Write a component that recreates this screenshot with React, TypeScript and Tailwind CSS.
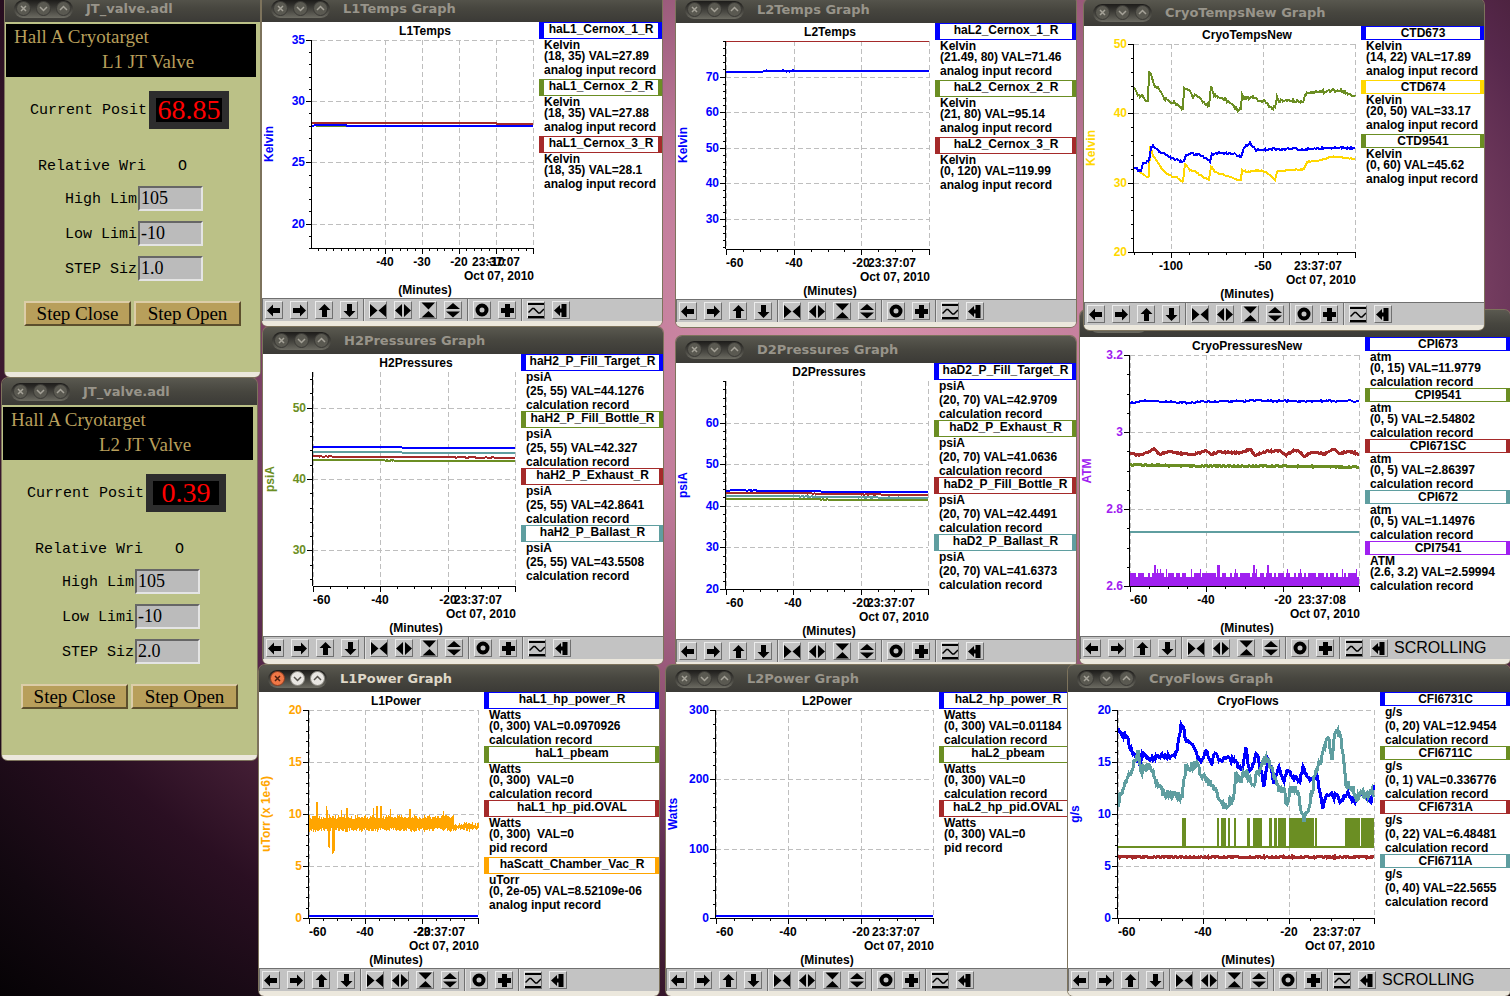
import React from 'react';
import clsx from 'clsx';

type Point = [number, number];

interface Series {
  color: string;
  width: number;
  points: Point[];
  jitter?: number;
  dash?: string;
}

interface Tick {
  value: number;
  label?: string;
}

interface Channel {
  name: string;
  color: string;
  unit: string;
  value: string;
  record: string;
}

interface GraphData {
  title: string;
  place: string;
  active?: boolean;
  axisLabel: string;
  axisColor: string;
  right: number;
  bottom: number;
  yRange: Point;
  yTicks: number[];
  yMinor: number;
  xMin: number;
  xTicks: Tick[];
  xMinor: number;
  time: string;
  series: Series[];
  extra?: React.ReactNode;
  channels: Channel[];
  boxClass: string;
  blockClass: string;
  tallRows?: boolean;
  status?: string;
}

const BLUE = '#0000ff';
const OLIVE = '#6b8e23';
const BROWN = '#a52a2a';
const TEAL = '#5f9ea0';
const GOLD = '#ffd700';
const ORANGE = '#ffa500';
const PURPLE = '#a020f0';

const LEFT = 50;
const TOP = 18;

// Repeatable noise, so the traces look the same on every render
const noise = (n: number) => {
  const v = Math.sin(n * 12.9898 + 4.1) * 43758.5453;
  return v - Math.floor(v);
};

const trace = (points: Point[], jitter = 0) => {
  const out: string[] = [];
  for (let i = 0; i < points.length - 1; i++) {
    const [x0, y0] = points[i];
    const [x1, y1] = points[i + 1];
    for (let x = x0; x < x1; x++) {
      const y = y0 + ((y1 - y0) * (x - x0)) / (x1 - x0);
      out.push(`${x},${(y + (noise(x + y0) - 0.5) * 2 * jitter).toFixed(1)}`);
    }
  }
  const last = points[points.length - 1];
  out.push(`${last[0]},${last[1]}`);
  return out.join(' ');
};

const range = (from: number, to: number) => Array.from({ length: to - from }, (_, i) => from + i);

const hourTicks: Tick[] = [
  { value: -60, label: '-60' },
  { value: -40, label: '-40' },
  { value: -20, label: '-20' },
  { value: 0 },
];

const purpleSpikes: Record<number, number> = {
  74: 228, 75: 228, 77: 232, 80: 232, 86: 232, 111: 232, 120: 232, 137: 228, 138: 228, 139: 228, 155: 232,
  173: 228, 174: 228, 176: 232, 187: 228, 188: 228, 207: 232, 220: 232, 262: 232, 276: 232,
};

const pressureNoise = (
  <path
    stroke={PURPLE}
    d={range(50, 279)
      .map((x) => `M${x + 0.5} 249V${purpleSpikes[x] ?? (noise(Math.floor(x / 2)) > 0.4 ? 236 : 240)}`)
      .join('')}
  />
);

const vacuumTops: Record<number, number> = {
  57: 110, 58: 110, 67: 114, 68: 118, 82: 118, 87: 116, 88: 116, 114: 116, 117: 114, 118: 114, 121: 114, 122: 114,
  131: 117, 150: 117, 151: 117, 184: 119,
};
const vacuumDips: Record<number, number> = { 69: 155, 70: 156, 73: 162, 74: 161, 75: 159 };

const vacuumNoise = (
  <path
    stroke={ORANGE}
    d={range(50, 220)
      .map((x) => {
        const quiet = x > 194;
        const top = vacuumTops[x] ?? (quiet ? 130 : 123) + noise(x) * 4;
        const low = vacuumDips[x] ?? 136 + noise(x + 7) * 4;
        return `M${x + 0.5} ${top.toFixed(0)}V${low.toFixed(0)}`;
      })
      .join('')}
  />
);

const flowBursts: Point[] = [
  [114, 118], [149, 151], [153, 158], [160, 162], [166, 168], [179, 182], [185, 194],
  [201, 204], [206, 209], [210, 218], [221, 246], [247, 249], [277, 292], [293, 306],
];

const flowPulses = (
  <g fill={OLIVE}>
    <rect x={50} y={154} width={256} height={2} />
    {flowBursts.map(([a, b]) => (
      <rect key={a} x={a} y={126} width={b - a} height={29} />
    ))}
  </g>
);

const graphs: GraphData[] = [
  {
    title: 'L1Temps',
    place: 'left-[262px] top-[-5px] w-[400px]',
    axisLabel: 'Kelvin',
    axisColor: BLUE,
    right: 271,
    bottom: 226,
    yRange: [18, 35],
    yTicks: [35, 30, 25, 20],
    yMinor: 1,
    xMin: -59.7,
    xTicks: [
      { value: -40, label: '-40' },
      { value: -30, label: '-30' },
      { value: -20, label: '-20' },
      { value: -10, label: '-10' },
      { value: 0 },
    ],
    xMinor: 2,
    time: '23:37:07',
    series: [
      { color: OLIVE, width: 2, points: [[54, 104], [84, 104]] },
      { color: BROWN, width: 2, points: [[50, 101], [234, 101], [235, 102], [271, 102]] },
      { color: BLUE, width: 2, points: [[50, 104], [54, 103], [84, 103], [85, 104], [271, 104]] },
    ],
    channels: [
      { name: 'haL1_Cernox_1_R', color: BLUE, unit: 'Kelvin', value: '(18, 35) VAL=27.89', record: 'analog input record' },
      { name: 'haL1_Cernox_2_R', color: OLIVE, unit: 'Kelvin', value: '(18, 35) VAL=27.88', record: 'analog input record' },
      { name: 'haL1_Cernox_3_R', color: BROWN, unit: 'Kelvin', value: '(18, 35) VAL=28.1', record: 'analog input record' },
    ],
    boxClass: 'h-[17px]',
    blockClass: 'h-10',
  },
  {
    title: 'L2Temps',
    place: 'left-[676px] top-[-4px] w-[400px]',
    axisLabel: 'Kelvin',
    axisColor: BLUE,
    right: 253,
    bottom: 226,
    yRange: [21.49, 80],
    yTicks: [70, 60, 50, 40, 30],
    yMinor: 2,
    xMin: -60,
    xTicks: hourTicks,
    xMinor: 5,
    time: '23:37:07',
    series: [
      { color: BROWN, width: 1, points: [[50, 18], [253, 18]] },
      { color: BLUE, width: 2, points: [[50, 49], [87, 49]] },
      { color: BLUE, width: 2, points: [[87, 48], [121, 48]], jitter: 0.7 },
      { color: BLUE, width: 2, points: [[121, 48], [253, 48]] },
    ],
    channels: [
      { name: 'haL2_Cernox_1_R', color: BLUE, unit: 'Kelvin', value: '(21.49, 80) VAL=71.46', record: 'analog input record' },
      { name: 'haL2_Cernox_2_R', color: OLIVE, unit: 'Kelvin', value: '(21, 80) VAL=95.14', record: 'analog input record' },
      { name: 'haL2_Cernox_3_R', color: BROWN, unit: 'Kelvin', value: '(0, 120) VAL=119.99', record: 'analog input record' },
    ],
    boxClass: 'h-[17px]',
    blockClass: 'h-10',
  },
  {
    title: 'CryoPressuresNew',
    place: 'left-[1080px] top-[310px] w-[430px]',
    axisLabel: 'ATM',
    axisColor: PURPLE,
    right: 279,
    bottom: 249,
    yRange: [2.6, 3.2],
    yTicks: [3.2, 3, 2.8, 2.6],
    yMinor: 0.05,
    xMin: -60,
    xTicks: hourTicks,
    xMinor: 5,
    time: '23:37:08',
    series: [
      { color: BLUE, width: 2, points: [[50, 66], [62, 64], [95, 65], [109, 66], [120, 65], [165, 64], [180, 63], [190, 64], [279, 64]], jitter: 0.8 },
      { color: TEAL, width: 2, points: [[50, 195], [279, 195]] },
      { color: OLIVE, width: 3, points: [[50, 128], [110, 129], [180, 129], [279, 130]], jitter: 0.6 },
      {
        color: BROWN,
        width: 3,
        jitter: 0.8,
        points: [
          [50, 116], [58, 118], [68, 116], [74, 112], [79, 117], [90, 115], [112, 118], [126, 114], [131, 117],
          [140, 115], [160, 116], [170, 112], [175, 118], [188, 114], [200, 114], [206, 118], [215, 113], [218, 114],
          [224, 119], [233, 115], [244, 117], [254, 112], [260, 117], [268, 114], [279, 117],
        ],
      },
    ],
    extra: pressureNoise,
    channels: [
      { name: 'CPI673', color: BLUE, unit: 'atm', value: '(0, 15) VAL=11.9779', record: 'calculation record' },
      { name: 'CPI9541', color: OLIVE, unit: 'atm', value: '(0, 5) VAL=2.54802', record: 'calculation record' },
      { name: 'CPI671SC', color: BROWN, unit: 'atm', value: '(0, 5) VAL=2.86397', record: 'calculation record' },
      { name: 'CPI672', color: TEAL, unit: 'atm', value: '(0, 5) VAL=1.14976', record: 'calculation record' },
      { name: 'CPI7541', color: PURPLE, unit: 'ATM', value: '(2.6, 3.2) VAL=2.59994', record: 'calculation record' },
    ],
    boxClass: 'h-[14px]',
    blockClass: 'h-[37px]',
    status: 'SCROLLING',
  },
  {
    title: 'CryoTempsNew',
    place: 'left-[1084px] top-[-1px] w-[400px]',
    axisLabel: 'Kelvin',
    axisColor: GOLD,
    right: 271,
    bottom: 226,
    yRange: [20, 50],
    yTicks: [50, 40, 30, 20],
    yMinor: 2,
    xMin: -120,
    xTicks: [{ value: -100, label: '-100' }, { value: -50, label: '-50' }, { value: 0 }],
    xMinor: 10,
    time: '23:37:07',
    series: [
      {
        color: GOLD,
        width: 2,
        jitter: 0.6,
        points: [
          [50, 141], [56, 146], [62, 151], [65, 151], [66, 121], [69, 129], [74, 137], [80, 146], [87, 150], [94, 152],
          [99, 156], [101, 138], [106, 144], [112, 146], [119, 151], [125, 154], [127, 140], [131, 146], [137, 148],
          [147, 151], [154, 154], [157, 154], [158, 144], [164, 146], [174, 144], [182, 146], [191, 154], [193, 145],
          [207, 144], [220, 143], [223, 136], [237, 134], [247, 131], [256, 131], [271, 133],
        ],
      },
      {
        color: BLUE,
        width: 2,
        jitter: 1,
        points: [
          [50, 141], [54, 144], [57, 145], [59, 137], [65, 135], [67, 122], [69, 120], [76, 126], [84, 130], [89, 133],
          [100, 136], [102, 129], [109, 128], [117, 129], [126, 135], [128, 128], [137, 127], [151, 128], [157, 131],
          [160, 121], [166, 117], [172, 124], [194, 123], [221, 123], [247, 122], [271, 122],
        ],
      },
      {
        color: OLIVE,
        width: 2,
        jitter: 1.6,
        points: [
          [50, 62], [54, 69], [59, 71], [62, 76], [64, 76], [65, 45], [68, 51], [71, 61], [74, 61], [80, 73], [86, 75],
          [94, 79], [99, 84], [100, 61], [104, 63], [109, 71], [112, 68], [114, 72], [121, 77], [125, 81], [127, 61],
          [130, 69], [136, 72], [142, 74], [147, 78], [154, 84], [157, 82], [158, 69], [162, 73], [169, 71], [177, 75],
          [182, 76], [187, 82], [191, 82], [193, 71], [195, 75], [207, 74], [219, 76], [221, 68], [227, 66], [247, 65],
          [256, 64], [261, 66], [266, 69], [271, 69],
        ],
      },
    ],
    channels: [
      { name: 'CTD673', color: BLUE, unit: 'Kelvin', value: '(14, 22) VAL=17.89', record: 'analog input record' },
      { name: 'CTD674', color: GOLD, unit: 'Kelvin', value: '(20, 50) VAL=33.17', record: 'analog input record' },
      { name: 'CTD9541', color: OLIVE, unit: 'Kelvin', value: '(0, 60) VAL=45.62', record: 'analog input record' },
    ],
    boxClass: 'h-[14px]',
    blockClass: 'h-10',
  },
  {
    title: 'H2Pressures',
    place: 'left-[263px] top-[327px] w-[400px]',
    axisLabel: 'psiA',
    axisColor: OLIVE,
    right: 252,
    bottom: 232,
    yRange: [25, 55],
    yTicks: [50, 40, 30],
    yMinor: 2,
    xMin: -60,
    xTicks: hourTicks,
    xMinor: 5,
    time: '23:37:07',
    series: [
      { color: BLUE, width: 2, points: [[50, 93], [136, 93], [142, 94], [252, 94]], jitter: 0.4 },
      { color: TEAL, width: 2, points: [[50, 98], [130, 98], [142, 99], [252, 99]], jitter: 0.4 },
      { color: BROWN, width: 2, points: [[50, 102], [80, 103], [170, 103], [252, 104]], jitter: 0.4 },
      { color: OLIVE, width: 2, points: [[50, 106], [100, 106], [142, 107], [252, 107]], jitter: 0.4 },
    ],
    channels: [
      { name: 'haH2_P_Fill_Target_R', color: BLUE, unit: 'psiA', value: '(25, 55) VAL=44.1276', record: 'calculation record' },
      { name: 'haH2_P_Fill_Bottle_R', color: OLIVE, unit: 'psiA', value: '(25, 55) VAL=42.327', record: 'calculation record' },
      { name: 'haH2_P_Exhaust_R', color: BROWN, unit: 'psiA', value: '(25, 55) VAL=42.8641', record: 'calculation record' },
      { name: 'haH2_P_Ballast_R', color: TEAL, unit: 'psiA', value: '(25, 55) VAL=43.5508', record: 'calculation record' },
    ],
    boxClass: 'h-[17px]',
    blockClass: 'h-10',
    tallRows: true,
  },
  {
    title: 'D2Pressures',
    place: 'left-[676px] top-[336px] w-[400px]',
    axisLabel: 'psiA',
    axisColor: BLUE,
    right: 252,
    bottom: 226,
    yRange: [20, 70],
    yTicks: [60, 50, 40, 30, 20],
    yMinor: 2,
    xMin: -60,
    xTicks: hourTicks,
    xMinor: 5,
    time: '23:37:07',
    series: [
      { color: OLIVE, width: 2, points: [[50, 136], [130, 136], [170, 137], [252, 137]], jitter: 0.3 },
      { color: TEAL, width: 2, points: [[50, 133], [110, 133], [150, 134], [252, 135]], jitter: 0.4 },
      { color: BROWN, width: 2, points: [[50, 130], [120, 130], [150, 131], [252, 132]], jitter: 0.3 },
      { color: BLUE, width: 2, points: [[50, 128], [60, 127], [90, 128], [140, 128], [150, 129], [252, 129]], jitter: 0.3 },
    ],
    channels: [
      { name: 'haD2_P_Fill_Target_R', color: BLUE, unit: 'psiA', value: '(20, 70) VAL=42.9709', record: 'calculation record' },
      { name: 'haD2_P_Exhaust_R', color: OLIVE, unit: 'psiA', value: '(20, 70) VAL=41.0636', record: 'calculation record' },
      { name: 'haD2_P_Fill_Bottle_R', color: BROWN, unit: 'psiA', value: '(20, 70) VAL=42.4491', record: 'calculation record' },
      { name: 'haD2_P_Ballast_R', color: TEAL, unit: 'psiA', value: '(20, 70) VAL=41.6373', record: 'calculation record' },
    ],
    boxClass: 'h-[17px]',
    blockClass: 'h-10',
    tallRows: true,
  },
  {
    title: 'L2Power',
    place: 'left-[666px] top-[665px] w-[410px]',
    axisLabel: 'Watts',
    axisColor: BLUE,
    right: 267,
    bottom: 226,
    yRange: [0, 300],
    yTicks: [300, 200, 100, 0],
    yMinor: 20,
    xMin: -60,
    xTicks: hourTicks,
    xMinor: 5,
    time: '23:37:07',
    series: [
      { color: BLUE, width: 2, points: [[50, 224], [267, 224]] },
      { color: BROWN, width: 1, points: [[50, 226], [267, 226]], dash: '4 4' },
    ],
    channels: [
      { name: 'haL2_hp_power_R', color: BLUE, unit: 'Watts', value: '(0, 300) VAL=0.01184', record: 'calculation record' },
      { name: 'haL2_pbeam', color: OLIVE, unit: 'Watts', value: '(0, 300) VAL=0', record: 'calculation record' },
      { name: 'haL2_hp_pid.OVAL', color: BROWN, unit: 'Watts', value: '(0, 300) VAL=0', record: 'pid record' },
    ],
    boxClass: 'h-[17px]',
    blockClass: 'h-[37px]',
  },
  {
    title: 'CryoFlows',
    place: 'left-[1068px] top-[665px] w-[442px]',
    axisLabel: 'g/s',
    axisColor: BLUE,
    right: 306,
    bottom: 226,
    yRange: [0, 20],
    yTicks: [20, 15, 10, 5, 0],
    yMinor: 1,
    xMin: -60,
    xTicks: hourTicks,
    xMinor: 5,
    time: '23:37:07',
    series: [
      { color: BROWN, width: 3, points: [[50, 165], [306, 165]], jitter: 0.8 },
      {
        color: BLUE,
        width: 3,
        jitter: 2.5,
        points: [
          [50, 38], [54, 41], [59, 46], [62, 55], [65, 60], [69, 68], [72, 74], [74, 62], [79, 66], [85, 67], [94, 63],
          [100, 65], [105, 65], [109, 58], [111, 46], [113, 33], [115, 34], [118, 50], [122, 51], [126, 55], [129, 65],
          [134, 68], [139, 58], [143, 73], [147, 61], [152, 70], [159, 66], [165, 68], [174, 78], [178, 58], [182, 81],
          [189, 61], [192, 75], [196, 93], [200, 68], [203, 76], [206, 91], [211, 73], [215, 90], [220, 76], [224, 86],
          [232, 88], [235, 75], [239, 86], [244, 88], [249, 85], [252, 101], [255, 115], [257, 105], [264, 101],
          [266, 106], [269, 101], [272, 110], [279, 101], [287, 110], [294, 101], [303, 111], [306, 93],
        ],
      },
      {
        color: TEAL,
        width: 3,
        jitter: 4.5,
        points: [
          [50, 113], [55, 96], [59, 85], [65, 76], [70, 60], [73, 80], [79, 75], [85, 76], [89, 95], [94, 100],
          [104, 103], [114, 106], [116, 91], [118, 76], [125, 73], [130, 71], [133, 86], [140, 88], [145, 95],
          [152, 105], [154, 111], [159, 118], [161, 110], [166, 106], [168, 83], [172, 88], [179, 81], [184, 95],
          [189, 83], [195, 71], [199, 68], [203, 75], [207, 85], [212, 98], [217, 101], [219, 116], [222, 95],
          [230, 98], [233, 118], [236, 126], [240, 118], [244, 101], [247, 81], [252, 71], [257, 55], [261, 46],
          [264, 71], [266, 46], [270, 41], [273, 48], [276, 68], [278, 93], [284, 96], [289, 108], [294, 96],
          [297, 106], [302, 98], [306, 105],
        ],
      },
    ],
    extra: flowPulses,
    channels: [
      { name: 'CFI6731C', color: BLUE, unit: 'g/s', value: '(0, 20) VAL=12.9454', record: 'calculation record' },
      { name: 'CFI6711C', color: OLIVE, unit: 'g/s', value: '(0, 1) VAL=0.336776', record: 'calculation record' },
      { name: 'CFI6731A', color: BROWN, unit: 'g/s', value: '(0, 22) VAL=6.48481', record: 'calculation record' },
      { name: 'CFI6711A', color: TEAL, unit: 'g/s', value: '(0, 40) VAL=22.5655', record: 'calculation record' },
    ],
    boxClass: 'h-[14px]',
    blockClass: 'h-10',
    tallRows: true,
    status: 'SCROLLING',
  },
  {
    title: 'L1Power',
    place: 'left-[259px] top-[665px] w-[400px]',
    active: true,
    axisLabel: 'uTorr (x 1e-6)',
    axisColor: ORANGE,
    right: 219,
    bottom: 226,
    yRange: [0, 20],
    yTicks: [20, 15, 10, 5, 0],
    yMinor: 1,
    xMin: -60,
    xTicks: hourTicks,
    xMinor: 5,
    time: '23:37:07',
    series: [
      { color: BLUE, width: 2, points: [[50, 224], [219, 224]] },
      { color: BROWN, width: 1, points: [[50, 226], [219, 226]], dash: '4 4' },
    ],
    extra: vacuumNoise,
    channels: [
      { name: 'haL1_hp_power_R', color: BLUE, unit: 'Watts', value: '(0, 300) VAL=0.0970926', record: 'calculation record' },
      { name: 'haL1_pbeam', color: OLIVE, unit: 'Watts', value: '(0, 300)  VAL=0', record: 'calculation record' },
      { name: 'haL1_hp_pid.OVAL', color: BROWN, unit: 'Watts', value: '(0, 300)  VAL=0', record: 'pid record' },
      { name: 'haScatt_Chamber_Vac_R', color: ORANGE, unit: 'uTorr', value: '(0, 2e-05) VAL=8.52109e-06', record: 'analog input record' },
    ],
    boxClass: 'h-[17px]',
    blockClass: 'h-[37px] nth-[6]:h-10',
  },
];

const toolGroups: { label: string; icon: React.ReactNode }[][] = [
  [
    { label: 'Pan left', icon: <path d="M1 8.5 7 2.5V6H14V11H7V14.5Z" /> },
    { label: 'Pan right', icon: <path d="M15 8.5 9 2.5V6H2V11H9V14.5Z" /> },
    { label: 'Pan up', icon: <path d="M8.5 2 14.5 8H11V15H6V8H2.5Z" /> },
    { label: 'Pan down', icon: <path d="M8.5 15 14.5 9H11V2H6V9H2.5Z" /> },
  ],
  [
    { label: 'Zoom out X', icon: <path d="M0 2 7.5 8.5 0 15ZM16 2 8.5 8.5 16 15Z" /> },
    { label: 'Zoom in X', icon: <path d="M7 2 0 8.5 7 15ZM9 2 16 8.5 9 15Z" /> },
    { label: 'Zoom out Y', icon: <path d="M1.5 0.5H15L8.5 7.5ZM1.5 15.5H15L8.5 9Z" /> },
    { label: 'Zoom in Y', icon: <path d="M8 1 15 7H1ZM1 9.5H15L8 15.5Z" /> },
  ],
  [
    { label: 'Auto scale', icon: <circle cx={8} cy={8} r={4.5} fill="none" stroke="black" strokeWidth={4} /> },
    { label: 'Center', icon: <path d="M6 2H11V6H15V11H11V15H6V11H2V6H6Z" /> },
  ],
  [
    {
      label: 'Refresh',
      icon: (
        <>
          <path d="M0 1H16V3H0ZM0 14H16V16H0Z" />
          <path d="M0.5 10.500 4.500 6.500H6L10.500 11H12L16 7" fill="none" stroke="black" strokeWidth={1.5} />
        </>
      ),
    },
    { label: 'Scroll', icon: <path d="M1 8.5 7 3V6.5H8.5V2H13.5V15H8.5V10.5H7V14Z" /> },
  ],
];

const wmButtons = [
  { label: 'Close', path: 'M5 5 10 10M10 5 5 10' },
  { label: 'Minimize', path: 'M4 6 7.5 9.5 11 6' },
  { label: 'Maximize', path: 'M4 9 7.5 5.5 11 9' },
];

const Frame: React.FC<{ title: string; place: string; active?: boolean; children: React.ReactNode }> = ({
  title,
  place,
  active,
  children,
}) => (
  <section className={clsx('absolute flex flex-col rounded-t-md rounded-b-md ring-1 ring-[#7d735c]', place)}>
    <header className="flex h-[27px] items-center rounded-t-md bg-linear-to-b from-[#5a5950] via-[#47463f] to-[#3b3a36]">
      <div className="ml-[9px] flex h-[18px] items-center gap-[5px] rounded-full bg-linear-to-b from-[#1d1c1a] to-[#6c6b62] px-[2px]">
        {wmButtons.map((b, i) => (
          <button
            key={b.label}
            type="button"
            aria-label={b.label}
            className={clsx(
              'size-[15px] rounded-full border',
              active
                ? i === 0
                  ? 'border-[#8b3b20] bg-[#f07746] text-[#502010]'
                  : 'border-[#8a8880] bg-[#e8e6e2] text-[#55524c]'
                : 'border-[#3a3935] bg-[#5a5951] text-[#a5a298]',
            )}
          >
            <svg viewBox="1 1 13 13" className="size-full" fill="none" stroke="currentColor" strokeWidth={1.5}>
              <path d={b.path} />
            </svg>
          </button>
        ))}
      </div>
      <h2
        className={clsx(
          "ml-[13px] font-['DejaVu_Sans',sans-serif] text-[13px] font-bold whitespace-nowrap",
          active ? 'text-[#dfd8c8]' : 'text-[#98948a]',
        )}
      >
        {title}
      </h2>
    </header>
    {children}
    <div className="h-[5px] rounded-b-md bg-[#ece8dd]" />
  </section>
);

const Chart: React.FC<{ graph: GraphData }> = ({ graph }) => {
  const { right, bottom, yRange, yMinor, xMin, xMinor } = graph;
  const width = right + 6;
  const height = bottom + 50;
  const center = Math.round((LEFT + right) / 2) + 2;
  const toY = (v: number) => Math.round(bottom - ((v - yRange[0]) / (yRange[1] - yRange[0])) * (bottom - TOP));
  const toX = (v: number) => Math.round(right - (v / xMin) * (right - LEFT));

  const minorY: number[] = [];
  for (let v = Math.ceil(yRange[0] / yMinor) * yMinor; v <= yRange[1] + yMinor / 10; v += yMinor) minorY.push(toY(v));
  const minorX: number[] = [];
  for (let v = 0; v >= xMin; v -= xMinor) minorX.push(toX(v));

  return (
    <svg width={width} height={height} className="shrink-0 font-['Liberation_Sans',sans-serif] text-[12px] font-bold">
      <text x={center} y={13} textAnchor="middle">{graph.title}</text>
      <g shapeRendering="crispEdges">
        <g stroke="#bebebe" strokeDasharray="5 3">
          {graph.yTicks.map((v) => (
            <path key={v} d={`M${LEFT} ${toY(v) + 0.5}H${right}`} />
          ))}
          {graph.xTicks.map((t) => (
            <path key={t.value} d={`M${toX(t.value) + 0.5} ${TOP}V${bottom}`} />
          ))}
        </g>
        {graph.extra}
        {graph.series.map((s, i) => (
          <polyline
            key={i}
            points={trace(s.points, s.jitter)}
            fill="none"
            stroke={s.color}
            strokeWidth={s.width}
            strokeDasharray={s.dash}
          />
        ))}
        <g stroke="black">
          <path d={`M${LEFT - 0.5} ${TOP}V${bottom}M${LEFT} ${bottom + 0.5}H${right + 1}`} />
          {minorY.map((y) => (
            <path key={y} d={`M${LEFT - 3} ${y + 0.5}H${LEFT}`} />
          ))}
          {graph.yTicks.map((v) => (
            <path key={v} d={`M${LEFT - 6} ${toY(v) + 0.5}H${LEFT}`} />
          ))}
          {minorX.map((x) => (
            <path key={x} d={`M${x + 0.5} ${bottom}V${bottom + 3}`} />
          ))}
          {graph.xTicks.map((t) => (
            <path key={t.value} d={`M${toX(t.value) + 0.5} ${bottom}V${bottom + 6}`} />
          ))}
        </g>
      </g>
      <g fill={graph.axisColor} textAnchor="end">
        {graph.yTicks.map((v) => (
          <text key={v} x={LEFT - 7} y={toY(v) + 4}>{v}</text>
        ))}
      </g>
      <text
        fill={graph.axisColor}
        textAnchor="middle"
        transform={`translate(11 ${Math.round((TOP + bottom) / 2)}) rotate(-90)`}
      >
        {graph.axisLabel}
      </text>
      {graph.xTicks.map((t) =>
        t.label ? (
          <text
            key={t.value}
            x={toX(t.value)}
            y={bottom + 18}
            textAnchor={t.value === xMin ? 'start' : 'middle'}
          >
            {t.label}
          </text>
        ) : null,
      )}
      <text x={right - 37} y={bottom + 18} textAnchor="middle">{graph.time}</text>
      <text x={right + 1} y={bottom + 32} textAnchor="end">Oct 07, 2010</text>
      <text x={center} y={bottom + 46} textAnchor="middle">(Minutes)</text>
    </svg>
  );
};

const Legend: React.FC<{ graph: GraphData }> = ({ graph }) => (
  <dl className="min-w-0 flex-1 overflow-hidden font-['Liberation_Sans',sans-serif] text-[12px] font-bold whitespace-pre">
    {graph.channels.map((c) => (
      <React.Fragment key={c.name}>
        <dt
          className={clsx('border-y border-r-4 border-l-5 text-center leading-[13px]', graph.boxClass)}
          style={{ borderColor: c.color }}
        >
          <span className="text-black">{c.name}</span>
        </dt>
        <dd className={clsx('pl-[5px]', graph.blockClass)}>
          <div className={graph.tallRows ? 'leading-[13px]' : 'leading-[12px]'}>{c.unit}</div>
          <div className={graph.tallRows ? 'leading-[14px]' : 'leading-[11px]'}>{c.value}</div>
          <div className={graph.tallRows ? 'leading-[14px]' : 'leading-[16px]'}>{c.record}</div>
        </dd>
      </React.Fragment>
    ))}
  </dl>
);

const Toolbar: React.FC<{ status?: string }> = ({ status }) => (
  <div className="flex h-[23px] items-center border-t border-l border-[#707070] bg-[#c3c3c3] pl-[2px]">
    {toolGroups.map((group, i) => (
      <React.Fragment key={i}>
        {i > 0 && <div className="mr-1 ml-[5px] h-full w-[2px] border-r border-l border-r-[#dedede] border-l-[#707070]" />}
        <div className="flex gap-[7px]">
          {group.map((tool) => (
            <button
              key={tool.label}
              type="button"
              aria-label={tool.label}
              className="size-[18px] border border-t-[#ececec] border-r-[#707070] border-b-[#707070] border-l-[#ececec]"
            >
              <svg viewBox="0 0 16 16" className="size-4">{tool.icon}</svg>
            </button>
          ))}
        </div>
      </React.Fragment>
    ))}
    {status && <span className="ml-[6px] font-['Liberation_Sans',sans-serif] text-[16px] leading-[20px]">{status}</span>}
  </div>
);

const GraphWindow: React.FC<{ graph: GraphData }> = ({ graph }) => (
  <Frame title={`${graph.title} Graph`} place={graph.place} active={graph.active}>
    <div className="flex bg-white">
      <Chart graph={graph} />
      <Legend graph={graph} />
    </div>
    <Toolbar status={graph.status} />
  </Frame>
);

interface ValveProps {
  name: string;
  place: string;
  position: string;
  high: string;
  low: string;
  step: string;
}

const ValveWindow: React.FC<ValveProps> = ({ name, place, position, high, low, step }) => {
  const fields = [
    { label: 'High Lim', value: high },
    { label: 'Low Limi', value: low },
    { label: 'STEP Siz', value: step },
  ];

  return (
    <Frame title="JT_valve.adl" place={place}>
      <div className="bg-[#bbc187] pt-[2px] pb-[46px] font-['Liberation_Mono',monospace] text-[15px] leading-[18px]">
        <div className="mr-1 ml-px h-[53px] bg-black font-['Liberation_Serif',serif] text-[19px] leading-[25px] text-[#b89f5b]">
          <div className="pl-2">Hall A Cryotarget</div>
          <div className="pl-24">{name} JT Valve</div>
        </div>
        <div className="mt-[14px] flex h-[38px] items-center">
          <span className="w-[144px] pt-[2px] pr-[2px] text-right">Current Posit</span>
          <output className="flex h-full w-20 items-center justify-center border-7 border-[#2d2d2d] bg-black font-['Liberation_Serif',serif] text-[28px] leading-[24px] text-[#ff0000]">
            {position}
          </output>
        </div>
        <div className="mt-[29px] flex">
          <span className="w-[141px] text-right">Relative Wri</span>
          <output className="ml-8">O</output>
        </div>
        <div className="mt-[10px] flex flex-col gap-[10px]">
          {fields.map((f) => (
            <div key={f.label} className="flex h-[25px] items-center">
              <label htmlFor={`${name}-${f.label}`} className="w-[133px] pt-[2px] pr-px text-right">{f.label}</label>
              <input
                id={`${name}-${f.label}`}
                defaultValue={f.value}
                className="h-full w-[65px] border-2 border-t-[#666666] border-r-[#e4e4e4] border-b-[#e4e4e4] border-l-[#666666] bg-[#bbbbbb] pl-px font-['Liberation_Serif',serif] text-[18px] leading-[20px]"
              />
            </div>
          ))}
        </div>
        <div className="mt-5 ml-[19px] flex gap-[3px] font-['Liberation_Serif',serif] text-[19px] leading-[20px]">
          {['Step Close', 'Step Open'].map((label) => (
            <button
              key={label}
              type="button"
              className="h-[25px] w-[107px] border-2 border-t-[#dccda8] border-r-[#5c4f2d] border-b-[#5c4f2d] border-l-[#dccda8] bg-[#b89f5b]"
            >
              {label}
            </button>
          ))}
        </div>
      </div>
    </Frame>
  );
};

export default function App() {
  return (
    <main className="relative h-screen min-h-[600px] w-full overflow-hidden bg-[radial-gradient(ellipse_73%_86%_at_57%_33%,#d690ab_0%,#c27d9b_25%,#8a4c6e_50%,#57284c_66%,#451f36_74%,#2a0f22_85%,#120810_100%,#000000_115%)] text-black">
      {graphs.map((g) => (
        <GraphWindow key={g.title} graph={g} />
      ))}
      <ValveWindow name="L1" place="left-[5px] top-[-5px] w-[255px]" position="68.85" high="105" low="-10" step="1.0" />
      <ValveWindow name="L2" place="left-[2px] top-[378px] w-[255px]" position="0.39" high="105" low="-10" step="2.0" />
    </main>
  );
}
